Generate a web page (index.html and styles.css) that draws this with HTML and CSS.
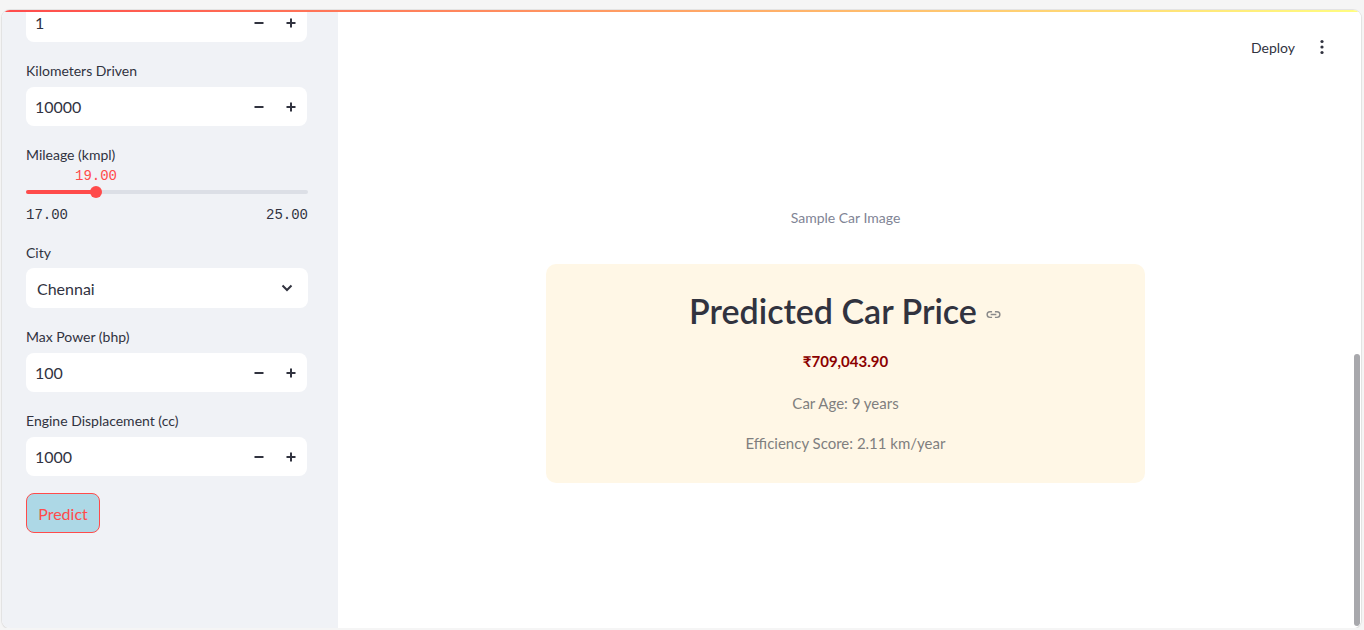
FILE: index.html
```html
<!DOCTYPE html>
<html>
<head>
<meta charset="utf-8">
<link rel="stylesheet" href="styles.css">
</head>
<body>
<div class="frame">
  <div class="decoration"></div>
  <div class="app">
    <aside class="sidebar">
      <div class="sidebar-inner">
        <div class="num-input first">
          <span class="num-value">1</span>
          <span class="steppers">
            <svg class="step" viewBox="0 0 12 12"><path d="M1.5 6h9" /></svg>
            <svg class="step" viewBox="0 0 12 12"><path d="M1.5 6h9M6 1.5v9" /></svg>
          </span>
        </div>

        <label class="field-label">Kilometers Driven</label>
        <div class="num-input">
          <span class="num-value">10000</span>
          <span class="steppers">
            <svg class="step" viewBox="0 0 12 12"><path d="M1.5 6h9" /></svg>
            <svg class="step" viewBox="0 0 12 12"><path d="M1.5 6h9M6 1.5v9" /></svg>
          </span>
        </div>

        <label class="field-label">Mileage (kmpl)</label>
        <div class="slider">
          <div class="slider-value-row"><span class="slider-value">19.00</span></div>
          <div class="track">
            <div class="track-fill"></div>
            <div class="thumb"></div>
          </div>
          <div class="slider-limits"><span>17.00</span><span>25.00</span></div>
        </div>

        <label class="field-label">City</label>
        <div class="select">
          <span class="select-value">Chennai</span>
          <svg class="chevron" viewBox="0 0 12 8"><path d="M1.5 1.5l4.5 4.5 4.5-4.5" /></svg>
        </div>

        <label class="field-label">Max Power (bhp)</label>
        <div class="num-input">
          <span class="num-value">100</span>
          <span class="steppers">
            <svg class="step" viewBox="0 0 12 12"><path d="M1.5 6h9" /></svg>
            <svg class="step" viewBox="0 0 12 12"><path d="M1.5 6h9M6 1.5v9" /></svg>
          </span>
        </div>

        <label class="field-label">Engine Displacement (cc)</label>
        <div class="num-input">
          <span class="num-value">1000</span>
          <span class="steppers">
            <svg class="step" viewBox="0 0 12 12"><path d="M1.5 6h9" /></svg>
            <svg class="step" viewBox="0 0 12 12"><path d="M1.5 6h9M6 1.5v9" /></svg>
          </span>
        </div>

        <button class="predict">Predict</button>
      </div>
    </aside>

    <main class="main">
      <header class="toolbar">
        <span class="deploy">Deploy</span>
        <svg class="kebab" viewBox="0 0 6 16"><circle cx="3" cy="2.5" r="1.6"/><circle cx="3" cy="8" r="1.6"/><circle cx="3" cy="13.5" r="1.6"/></svg>
      </header>
      <div class="content">
        <p class="caption">Sample Car Image</p>
        <div class="result-card">
          <h1 class="result-title">Predicted Car Price
            <svg class="link-icon" viewBox="0 0 24 24"><path d="M10 8H7a4 4 0 0 0 0 8h3M14 8h3a4 4 0 0 1 0 8h-3M8 12h8"/></svg>
          </h1>
          <p class="price">₹709,043.90</p>
          <p class="meta">Car Age: 9 years</p>
          <p class="meta">Efficiency Score: 2.11 km/year</p>
        </div>
      </div>
      <div class="scroll-thumb"></div>
    </main>
  </div>
</div>
</body>
</html>
```

FILE: styles.css
```css
* { box-sizing: border-box; }

html, body {
  margin: 0;
  padding: 0;
  background: #f5f5f5;
  font-family: "Source Sans Pro", Lato, "Open Sans", sans-serif;
  color: #31333f;
}

.frame {
  margin: 10px 0 0 2px;
  width: 1359px;
  height: 618px;
  border-radius: 8px;
  overflow: hidden;
  background: #fff;
  box-shadow: 0 0 0 1px #e3e3e3, 0 1px 2px rgba(0,0,0,0.12);
  display: flex;
  flex-direction: column;
  position: relative;
}

.decoration {
  height: 2px;
  flex: none;
  background: linear-gradient(90deg, #ff4b4b, #fffd80);
  position: relative;
  z-index: 2;
}

.app {
  flex: 1;
  display: flex;
  min-height: 0;
}

/* Sidebar */
.sidebar {
  width: 336px;
  flex: none;
  background: #f0f2f6;
  overflow: hidden;
}

.sidebar-inner {
  padding: 0 30px 0 24px;
  margin-top: -9px;
  display: flex;
  flex-direction: column;
  align-items: stretch;
}

.field-label {
  display: block;
  font-size: 14px;
  line-height: 20px;
  color: #31333f;
  margin: 19px 0 6px;
}

.num-input {
  height: 39px;
  width: 281px;
  background: #fff;
  border-radius: 8px;
  display: flex;
  align-items: center;
  justify-content: space-between;
  padding: 0 10px 0 9px;
}

.num-value {
  font-size: 16px;
  color: #31333f;
}

.steppers {
  display: flex;
  gap: 20px;
  align-items: center;
}

.step {
  width: 12px;
  height: 12px;
  fill: none;
  stroke: #31333f;
  stroke-width: 2;
}

/* Slider */
.slider {
  width: 282px;
}

.slider-value-row {
  height: 22px;
  position: relative;
  margin-top: -6px;
}

.slider-value {
  position: absolute;
  left: 70px;
  top: 3px;
  transform: translateX(-50%);
  font-family: "Liberation Mono", "DejaVu Sans Mono", monospace;
  font-size: 14px;
  color: #ff4b4b;
}

.track {
  height: 4px;
  margin-top: 3px;
  background: #dcdfe6;
  border-radius: 2px;
  position: relative;
}

.track-fill {
  width: 70px;
  height: 4px;
  background: #ff4b4b;
  border-radius: 2px;
}

.thumb {
  position: absolute;
  left: 64px;
  top: -4px;
  width: 12px;
  height: 12px;
  border-radius: 50%;
  background: #ff4b4b;
}

.slider-limits {
  display: flex;
  justify-content: space-between;
  margin-top: 12px;
  font-family: "Liberation Mono", "DejaVu Sans Mono", monospace;
  font-size: 14px;
  line-height: 18px;
  color: #31333f;
}

/* Select */
.select {
  height: 40px;
  width: 282px;
  margin-top: -1px;
  background: #fff;
  border-radius: 8px;
  display: flex;
  align-items: center;
  justify-content: space-between;
  padding: 0 15px 0 11px;
}

.select-value {
  font-size: 16px;
  color: #31333f;
}

.chevron {
  width: 12px;
  height: 8px;
  fill: none;
  stroke: #31333f;
  stroke-width: 2;
}

/* Button */
.predict {
  align-self: flex-start;
  margin-top: 17px;
  height: 40px;
  width: 74px;
  padding: 0;
  background: #add8e6;
  border: 1px solid #ff4b4b;
  border-radius: 8px;
  color: #ff4b4b;
  font-family: inherit;
  font-size: 16px;
}

/* Main */
.main {
  flex: 1;
  position: relative;
  display: flex;
  flex-direction: column;
  background: #fff;
}

.toolbar {
  height: 70px;
  display: flex;
  align-items: center;
  justify-content: flex-end;
  gap: 24px;
  padding: 0 36px 0 0;
}

.deploy {
  font-size: 14px;
  color: #31333f;
}

.kebab {
  width: 6px;
  height: 16px;
  fill: #31333f;
}

.content {
  width: 599px;
  margin: 0 auto;
  transform: translateX(-4px);
  display: flex;
  flex-direction: column;
  align-items: center;
}

.caption {
  margin: 126px 0 0;
  font-size: 14px;
  line-height: 20px;
  color: #808495;
}

.result-card {
  margin-top: 36px;
  width: 599px;
  height: 219px;
  background: #fff7e6;
  border-radius: 10px;
  display: flex;
  flex-direction: column;
  align-items: center;
  padding-top: 25px;
}

.result-title {
  margin: 0;
  font-size: 34px;
  font-weight: 600;
  line-height: 44px;
  color: #31333f;
  display: flex;
  align-items: center;
  gap: 8px;
}

.link-icon {
  width: 17px;
  height: 17px;
  fill: none;
  stroke: #8a8a8a;
  stroke-width: 2;
  margin-top: 6px;
}

.price {
  margin: 18px 0 0;
  font-size: 15px;
  font-weight: 700;
  line-height: 20px;
  color: #8b0000;
}

.meta {
  margin: 22px 0 0;
  font-size: 15px;
  line-height: 20px;
  color: #7f7f7f;
}

.meta + .meta {
  margin-top: 20px;
}

.scroll-thumb {
  position: absolute;
  right: 1px;
  bottom: 2px;
  width: 6px;
  height: 272px;
  border-radius: 3px;
  background: #a8a8ac;
}
```
